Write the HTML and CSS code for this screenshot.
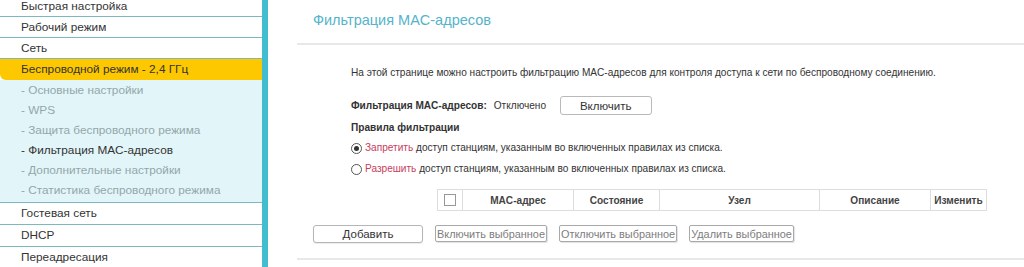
FILE: index.html
```html
<!DOCTYPE html>
<html lang="ru">
<head>
    <meta charset="UTF-8">
    <title>Фильтрация MAC-адресов</title>
    <link rel="stylesheet" href="styles.css">
</head>
<body>
    <div class="sidebar">
        <ul class="menu">
            <li class="menu-item">Быстрая настройка</li>
            <li class="menu-item">Рабочий режим</li>
            <li class="menu-item">Сеть</li>
            <li class="menu-item active">Беспроводной режим - 2,4 ГГц</li>
            <li class="submenu">
                <div class="sub-item">- Основные настройки</div>
                <div class="sub-item">- WPS</div>
                <div class="sub-item">- Защита беспроводного режима</div>
                <div class="sub-item current">- Фильтрация MAC-адресов</div>
                <div class="sub-item">- Дополнительные настройки</div>
                <div class="sub-item">- Статистика беспроводного режима</div>
            </li>
            <li class="menu-item">Гостевая сеть</li>
            <li class="menu-item">DHCP</li>
            <li class="menu-item">Переадресация</li>
        </ul>
    </div>

    <div class="main">
        <div class="panel">
            <div class="panel-head">Фильтрация MAC-адресов</div>

            <div class="panel-body">
                <p class="intro">На этой странице можно настроить фильтрацию MAC-адресов для контроля доступа к сети по беспроводному соединению.</p>

                <div class="status-row">
                    <span class="label">Фильтрация MAC-адресов:</span>
                    <span class="status">Отключено</span>
                    <button type="button" class="btn btn-toggle">Включить</button>
                </div>

                <div class="label rules-title">Правила фильтрации</div>

                <label class="radio-row">
                    <span class="radio checked"></span>
                    <span><em class="hl">Запретить</em> доступ станциям, указанным во включенных правилах из списка.</span>
                </label>
                <label class="radio-row">
                    <span class="radio"></span>
                    <span><em class="hl">Разрешить</em> доступ станциям, указанным во включенных правилах из списка.</span>
                </label>

                <table class="rules">
                    <tr>
                        <th class="c-check"><span class="checkbox"></span></th>
                        <th class="c-mac">MAC-адрес</th>
                        <th class="c-state">Состояние</th>
                        <th class="c-host">Узел</th>
                        <th class="c-desc">Описание</th>
                        <th class="c-edit">Изменить</th>
                    </tr>
                </table>
            </div>

            <div class="actions">
                <button type="button" class="btn btn-add">Добавить</button>
                <button type="button" class="btn btn-off" disabled>Включить выбранное</button>
                <button type="button" class="btn btn-off" disabled>Отключить выбранное</button>
                <button type="button" class="btn btn-off" disabled>Удалить выбранное</button>
            </div>
        </div>
    </div>
</body>
</html>
```

FILE: styles.css
```css
body {
    margin: 0;
    font-family: 'Liberation Sans', Arial, sans-serif;
    color: #333;
    background: #fff;
    display: flex;
    height: 267px;
    overflow: hidden;
}
.sidebar {
    width: 262px;
    flex-shrink: 0;
    border-right: 6px solid #42bdd0;
    background: #fff;
}
.menu {
    list-style: none;
    margin: -4px 0 0 0;
    padding: 0;
}
.menu-item {
    height: 20px;
    line-height: 20px;
    padding-left: 21px;
    font-size: 11.8px;
    color: #333;
    border-bottom: 1px solid #7cb9bf;
}
.menu-item.active {
    height: 21px;
    line-height: 21px;
    background: #fdc800;
    border-bottom: none;
    border-bottom-left-radius: 6px;
}
.submenu {
    background: #e2f5f8;
    padding-bottom: 2px;
    border-bottom: 1px solid #7cb9bf;
}
.submenu ~ .menu-item {
    height: 21px;
    line-height: 21px;
}
.sub-item {
    height: 20px;
    line-height: 20px;
    padding-left: 21px;
    font-size: 11.8px;
    color: #93a7ab;
}
.sub-item.current {
    color: #333;
}
.main {
    flex: 1;
    padding-left: 29px;
}
.panel-head {
    height: 31px;
    padding: 12px 0 0 16px;
    line-height: 16px;
    font-size: 14.5px;
    color: #56b3ca;
    border-bottom: 2px solid #e8e8e8;
}
.panel-body {
    padding-left: 54px;
    font-size: 10.1px;
}
.intro {
    margin: 21px 0 0 0;
    line-height: 14px;
}
.status-row {
    margin-top: 16px;
    height: 19px;
    display: flex;
    align-items: center;
}
.label {
    font-weight: bold;
}
.status {
    margin-left: 7px;
    width: 66px;
}
.btn {
    font-family: 'Liberation Sans', Arial, sans-serif;
    font-size: 10.9px;
    background: #fff;
    border: 1px solid #b9b9b9;
    border-radius: 3px;
    color: #333;
    padding: 0;
    cursor: pointer;
}
.btn-toggle {
    width: 92px;
    height: 19px;
    font-size: 11.5px;
}
.rules-title {
    margin-top: 6px;
    line-height: 14px;
}
.radio-row {
    display: flex;
    align-items: center;
    margin-top: 5px;
    height: 16px;
    line-height: 16px;
}
.radio {
    width: 9px;
    height: 9px;
    border: 1px solid #555;
    border-radius: 50%;
    margin-right: 3px;
    position: relative;
    flex-shrink: 0;
}
.radio.checked::after {
    content: "";
    position: absolute;
    left: 2px;
    top: 2px;
    width: 5px;
    height: 5px;
    border-radius: 50%;
    background: #333;
}
.hl {
    font-style: normal;
    color: #c83c5c;
}
.rules {
    margin: 12px 0 0 86px;
    width: 550px;
    border-collapse: collapse;
    border: 1px solid #ddd;
}
.rules th {
    height: 20px;
    padding: 0;
    font-size: 10.1px;
    font-weight: bold;
    color: #444;
    text-align: center;
    border: 1px solid #ddd;
}
.c-check { width: 24px; }
.c-mac { width: 110px; }
.c-state { width: 85px; }
.c-host { width: 159px; }
.c-desc { width: 110px; }
.checkbox {
    display: inline-block;
    width: 10px;
    height: 10px;
    border: 1px solid #999;
    vertical-align: middle;
}
.actions {
    margin-top: 14px;
    padding-left: 16px;
    padding-bottom: 15px;
    display: flex;
    gap: 12px;
    border-bottom: 2px solid #e8e8e8;
}
.btn-add {
    width: 110px;
    height: 18px;
    font-size: 11.5px;
    border-color: #b5b5b5;
    box-shadow: 0 1px 1px rgba(0, 0, 0, 0.08);
}
.btn-off {
    height: 17px;
    padding: 0 1px;
    color: #7d7d7d;
    border-color: #a9a9a9;
    border-radius: 2px;
    box-shadow: 1px 1px 1px rgba(0, 0, 0, 0.12);
}
```
